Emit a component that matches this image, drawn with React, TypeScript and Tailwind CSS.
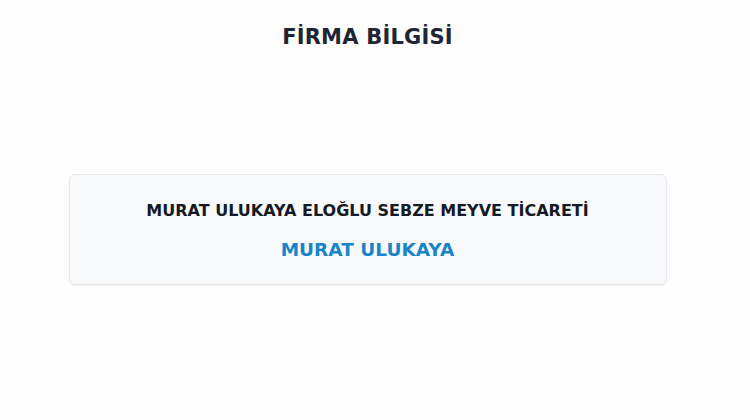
export default function App() {
  return (
    <div className="min-h-[420px] w-full bg-[#fdfdfe]">
      <div className="w-[735px] flex flex-col items-center pt-[24px]"
        style={{ fontFamily: "'DejaVu Sans', sans-serif" }}>
        <h1 className="text-[21px] leading-[26px] font-bold text-[#1e2633] tracking-[0.01em]">FİRMA BİLGİSİ</h1>

        <div className="mt-[124px] w-[598px] h-[111px] rounded-md border border-[#e6e8ec] bg-[#f8f9fb] shadow-[0_1px_3px_rgba(0,0,0,0.05)] flex flex-col items-center pt-[26px]">
          <p className="text-[16px] leading-[20px] font-bold text-[#151a24]">MURAT ULUKAYA ELOĞLU SEBZE MEYVE TİCARETİ</p>
          <p className="mt-[17px] text-[18.5px] leading-[24px] font-bold text-[#1a85c6]">MURAT ULUKAYA</p>
        </div>
      </div>
    </div>
  )
}
